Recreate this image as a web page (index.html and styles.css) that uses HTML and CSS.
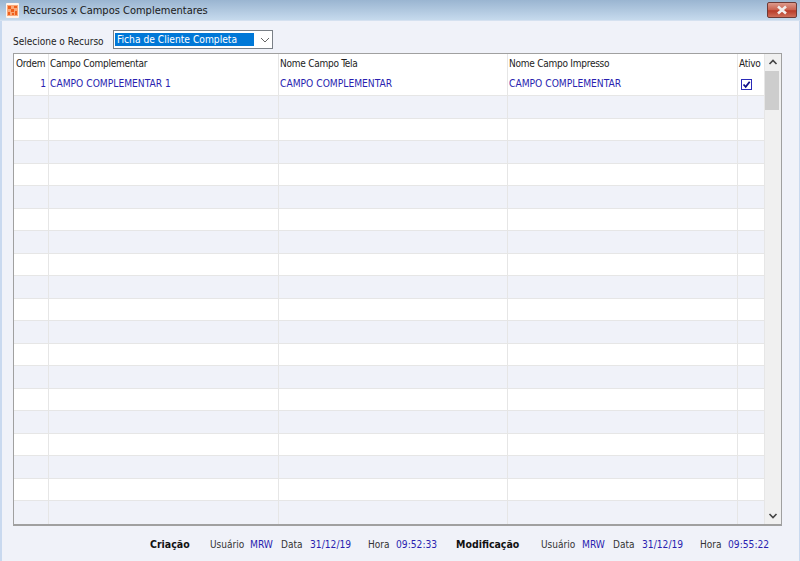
FILE: index.html
```html
<!DOCTYPE html>
<html lang="pt">
<head>
<meta charset="utf-8">
<title>Recursos x Campos Complementares</title>
<link rel="stylesheet" href="styles.css">
</head>
<body>
<div class="window">
  <header class="titlebar">
    <svg class="appicon" width="13" height="15" viewBox="0 0 13 15"><rect width="13" height="15" rx="1" fill="#fff3ea"/><rect x="1" y="2" width="11" height="11" fill="#f9a878"/><path d="M2 3h3v3H2zM8 3h3v2H8zM5 6h3v3H5zM2 9h2v3H2zM9 8h2v4H9zM6 10h2v2H6z" fill="#ef5f1c"/></svg>
    <span class="title">Recursos x Campos Complementares</span>
    <button class="close" type="button" aria-label="Fechar">
      <svg width="14" height="10" viewBox="0 0 14 10"><path d="M3 1.5l8 7M11 1.5l-8 7" stroke="#f2eeee" stroke-width="2.6" fill="none"/></svg>
    </button>
  </header>
  <main class="client">
    <div class="selector">
      <label class="sel-label">Selecione o Recurso</label>
      <div class="combo">
        <span class="combo-value">Ficha de Cliente Completa</span>
        <svg class="combo-arrow" width="10" height="6" viewBox="0 0 10 6"><path d="M1 1l4 4 4-4" stroke="#666" stroke-width="1" fill="none"/></svg>
      </div>
    </div>
    <div class="grid-box">
      <div class="grid">
        <div class="row head">
          <div class="c c1">Ordem</div><div class="c c2">Campo Complementar</div><div class="c c3">Nome Campo Tela</div><div class="c c4">Nome Campo Impresso</div><div class="c c5">Ativo</div>
        </div>
        <div class="row data odd">
          <div class="c c1 num">1</div><div class="c c2">CAMPO COMPLEMENTAR 1</div><div class="c c3">CAMPO COMPLEMENTAR</div><div class="c c4">CAMPO COMPLEMENTAR</div>
          <div class="c c5 chk"><svg width="11" height="11" viewBox="0 0 11 11"><rect x=".5" y=".5" width="10" height="10" fill="#fff" stroke="#2a2ab8"/><path d="M2.5 5.5l2.2 2.3 4-5" stroke="#10108a" stroke-width="1.8" fill="none"/></svg></div>
        </div>
        <div class="row even"><div class="c c1"></div><div class="c c2"></div><div class="c c3"></div><div class="c c4"></div><div class="c c5"></div></div>
        <div class="row odd"><div class="c c1"></div><div class="c c2"></div><div class="c c3"></div><div class="c c4"></div><div class="c c5"></div></div>
        <div class="row even"><div class="c c1"></div><div class="c c2"></div><div class="c c3"></div><div class="c c4"></div><div class="c c5"></div></div>
        <div class="row odd"><div class="c c1"></div><div class="c c2"></div><div class="c c3"></div><div class="c c4"></div><div class="c c5"></div></div>
        <div class="row even"><div class="c c1"></div><div class="c c2"></div><div class="c c3"></div><div class="c c4"></div><div class="c c5"></div></div>
        <div class="row odd"><div class="c c1"></div><div class="c c2"></div><div class="c c3"></div><div class="c c4"></div><div class="c c5"></div></div>
        <div class="row even"><div class="c c1"></div><div class="c c2"></div><div class="c c3"></div><div class="c c4"></div><div class="c c5"></div></div>
        <div class="row odd"><div class="c c1"></div><div class="c c2"></div><div class="c c3"></div><div class="c c4"></div><div class="c c5"></div></div>
        <div class="row even"><div class="c c1"></div><div class="c c2"></div><div class="c c3"></div><div class="c c4"></div><div class="c c5"></div></div>
        <div class="row odd"><div class="c c1"></div><div class="c c2"></div><div class="c c3"></div><div class="c c4"></div><div class="c c5"></div></div>
        <div class="row even"><div class="c c1"></div><div class="c c2"></div><div class="c c3"></div><div class="c c4"></div><div class="c c5"></div></div>
        <div class="row odd"><div class="c c1"></div><div class="c c2"></div><div class="c c3"></div><div class="c c4"></div><div class="c c5"></div></div>
        <div class="row even"><div class="c c1"></div><div class="c c2"></div><div class="c c3"></div><div class="c c4"></div><div class="c c5"></div></div>
        <div class="row odd"><div class="c c1"></div><div class="c c2"></div><div class="c c3"></div><div class="c c4"></div><div class="c c5"></div></div>
        <div class="row even"><div class="c c1"></div><div class="c c2"></div><div class="c c3"></div><div class="c c4"></div><div class="c c5"></div></div>
        <div class="row odd"><div class="c c1"></div><div class="c c2"></div><div class="c c3"></div><div class="c c4"></div><div class="c c5"></div></div>
        <div class="row even"><div class="c c1"></div><div class="c c2"></div><div class="c c3"></div><div class="c c4"></div><div class="c c5"></div></div>
        <div class="row odd"><div class="c c1"></div><div class="c c2"></div><div class="c c3"></div><div class="c c4"></div><div class="c c5"></div></div>
        <div class="row even last"><div class="c c1"></div><div class="c c2"></div><div class="c c3"></div><div class="c c4"></div><div class="c c5"></div></div>
      </div>
      <div class="scrollbar">
        <svg class="sb-arrow" width="16" height="17" viewBox="0 0 16 17"><path d="M4.5 10L8 6.5l3.5 3.5" stroke="#444" stroke-width="1.6" fill="none"/></svg>
        <div class="sb-thumb"></div>
        <div class="sb-track"></div>
        <svg class="sb-arrow" width="16" height="17" viewBox="0 0 16 17"><path d="M4.5 7L8 10.5 11.5 7" stroke="#444" stroke-width="1.6" fill="none"/></svg>
      </div>
    </div>
    <footer class="audit">
      <b class="a-head">Criação</b>
      <span class="a-l">Usuário</span><span class="a-v">MRW</span>
      <span class="a-l">Data</span><span class="a-v">31/12/19</span>
      <span class="a-l">Hora</span><span class="a-v">09:52:33</span>
      <b class="a-head">Modificação</b>
      <span class="a-l">Usuário</span><span class="a-v">MRW</span>
      <span class="a-l">Data</span><span class="a-v">31/12/19</span>
      <span class="a-l">Hora</span><span class="a-v">09:55:22</span>
    </footer>
  </main>
</div>
</body>
</html>
```
FILE: styles.css
```css
* { box-sizing: border-box; }
html, body { margin: 0; padding: 0; }
body { width: 800px; height: 561px; overflow: hidden; background: #f0f2f9; font-family: "DejaVu Sans Condensed", "DejaVu Sans", sans-serif; font-size: 10px; color: #222; }
.window { width: 800px; height: 561px; display: flex; flex-direction: column; border-left: 2px solid #c9d9ef; border-right: 1px solid #c9d9ef; }
.titlebar { height: 21px; margin-left: -2px; margin-right: -1px; display: flex; align-items: center; padding-left: 6px; background: linear-gradient(#9ab5d1, #c6daed); border-bottom: 1px solid #d5e1f0; }
.appicon { width: 13px; height: 15px; }
.title { margin-left: 4px; font-size: 11px; color: #1a1a1a; }
.close { margin-left: auto; margin-right: 3px; margin-top: -1px; width: 30px; height: 16px; padding: 0; border: 1px solid #6d3a36; border-radius: 2px; background: linear-gradient(#dc9a8c 0%, #c9604d 50%, #b83a28 55%, #cf6f5a 100%); display: flex; align-items: center; justify-content: center; }
.client { flex: 1; display: flex; flex-direction: column; padding-left: 11px; padding-right: 17px; }
.selector { height: 32px; padding-top: 9px; display: flex; align-items: flex-start; }
.sel-label { width: 100px; margin-top: 5px; font-size: 10px; line-height: 13px; }
.combo { width: 160px; height: 19px; border: 1px solid #7a8087; background: #fff; display: flex; align-items: center; padding: 1px; }
.combo-value { width: 139px; height: 13px; background: #0078d7; color: #fff; font-size: 10.2px; line-height: 13px; padding-left: 2px; }
.combo-arrow { margin-left: 6px; }
.grid-box { height: 473px; display: flex; border: 1px solid #a0a0a0; border-bottom-width: 2px; background: #fff; }
.grid { flex: 1; min-width: 0; display: flex; flex-direction: column; }
.row { flex: none; display: flex; height: 22.5px; border-bottom: 1px solid #e6e6e6; }
.row.head { height: 19.5px; border-bottom: 0; background: #fff; color: #222; font-size: 10px; letter-spacing: -0.25px; line-height: 20px; }
.row.data { color: #2a1fb0; font-size: 10.2px; line-height: 20px; }
.row.odd { background: #fff; }
.row.even { background: #f0f2f9; }
.row.last { border-bottom: 0; flex: 1; }
.c { flex: none; height: 100%; padding-left: 1px; border-right: 1px solid #e6e6e6; white-space: nowrap; overflow: hidden; }
.c1 { width: 35px; padding-left: 2px; }
.c2 { width: 230px; }
.c3 { width: 229px; }
.c4 { width: 230px; }
.c5 { width: 27px; }
.num { text-align: right; padding-right: 2px; }
.chk { display: flex; justify-content: flex-start; padding: 5px 0 0 3px; }
.scrollbar { flex: none; width: 16px; background: #f0f0f0; display: flex; flex-direction: column; }
.sb-arrow { flex: none; width: 16px; height: 17px; }
.sb-thumb { height: 39px; width: 14px; background: #cdcdcd; }
.sb-track { flex: 1; }
.audit { height: 35px; padding: 12px 0 0 137px; display: grid; grid-template-columns: 60px 40px 31px 29px 58px 28px 60px 85px 41px 31px 29px 58px 28px auto; align-items: start; font-size: 10px; line-height: 13px; white-space: nowrap; }
.a-head { font-size: 10.5px; color: #111; }
.a-v { color: #2a1fb0; font-size: 10.2px; }
.a-l { color: #333; }
```
